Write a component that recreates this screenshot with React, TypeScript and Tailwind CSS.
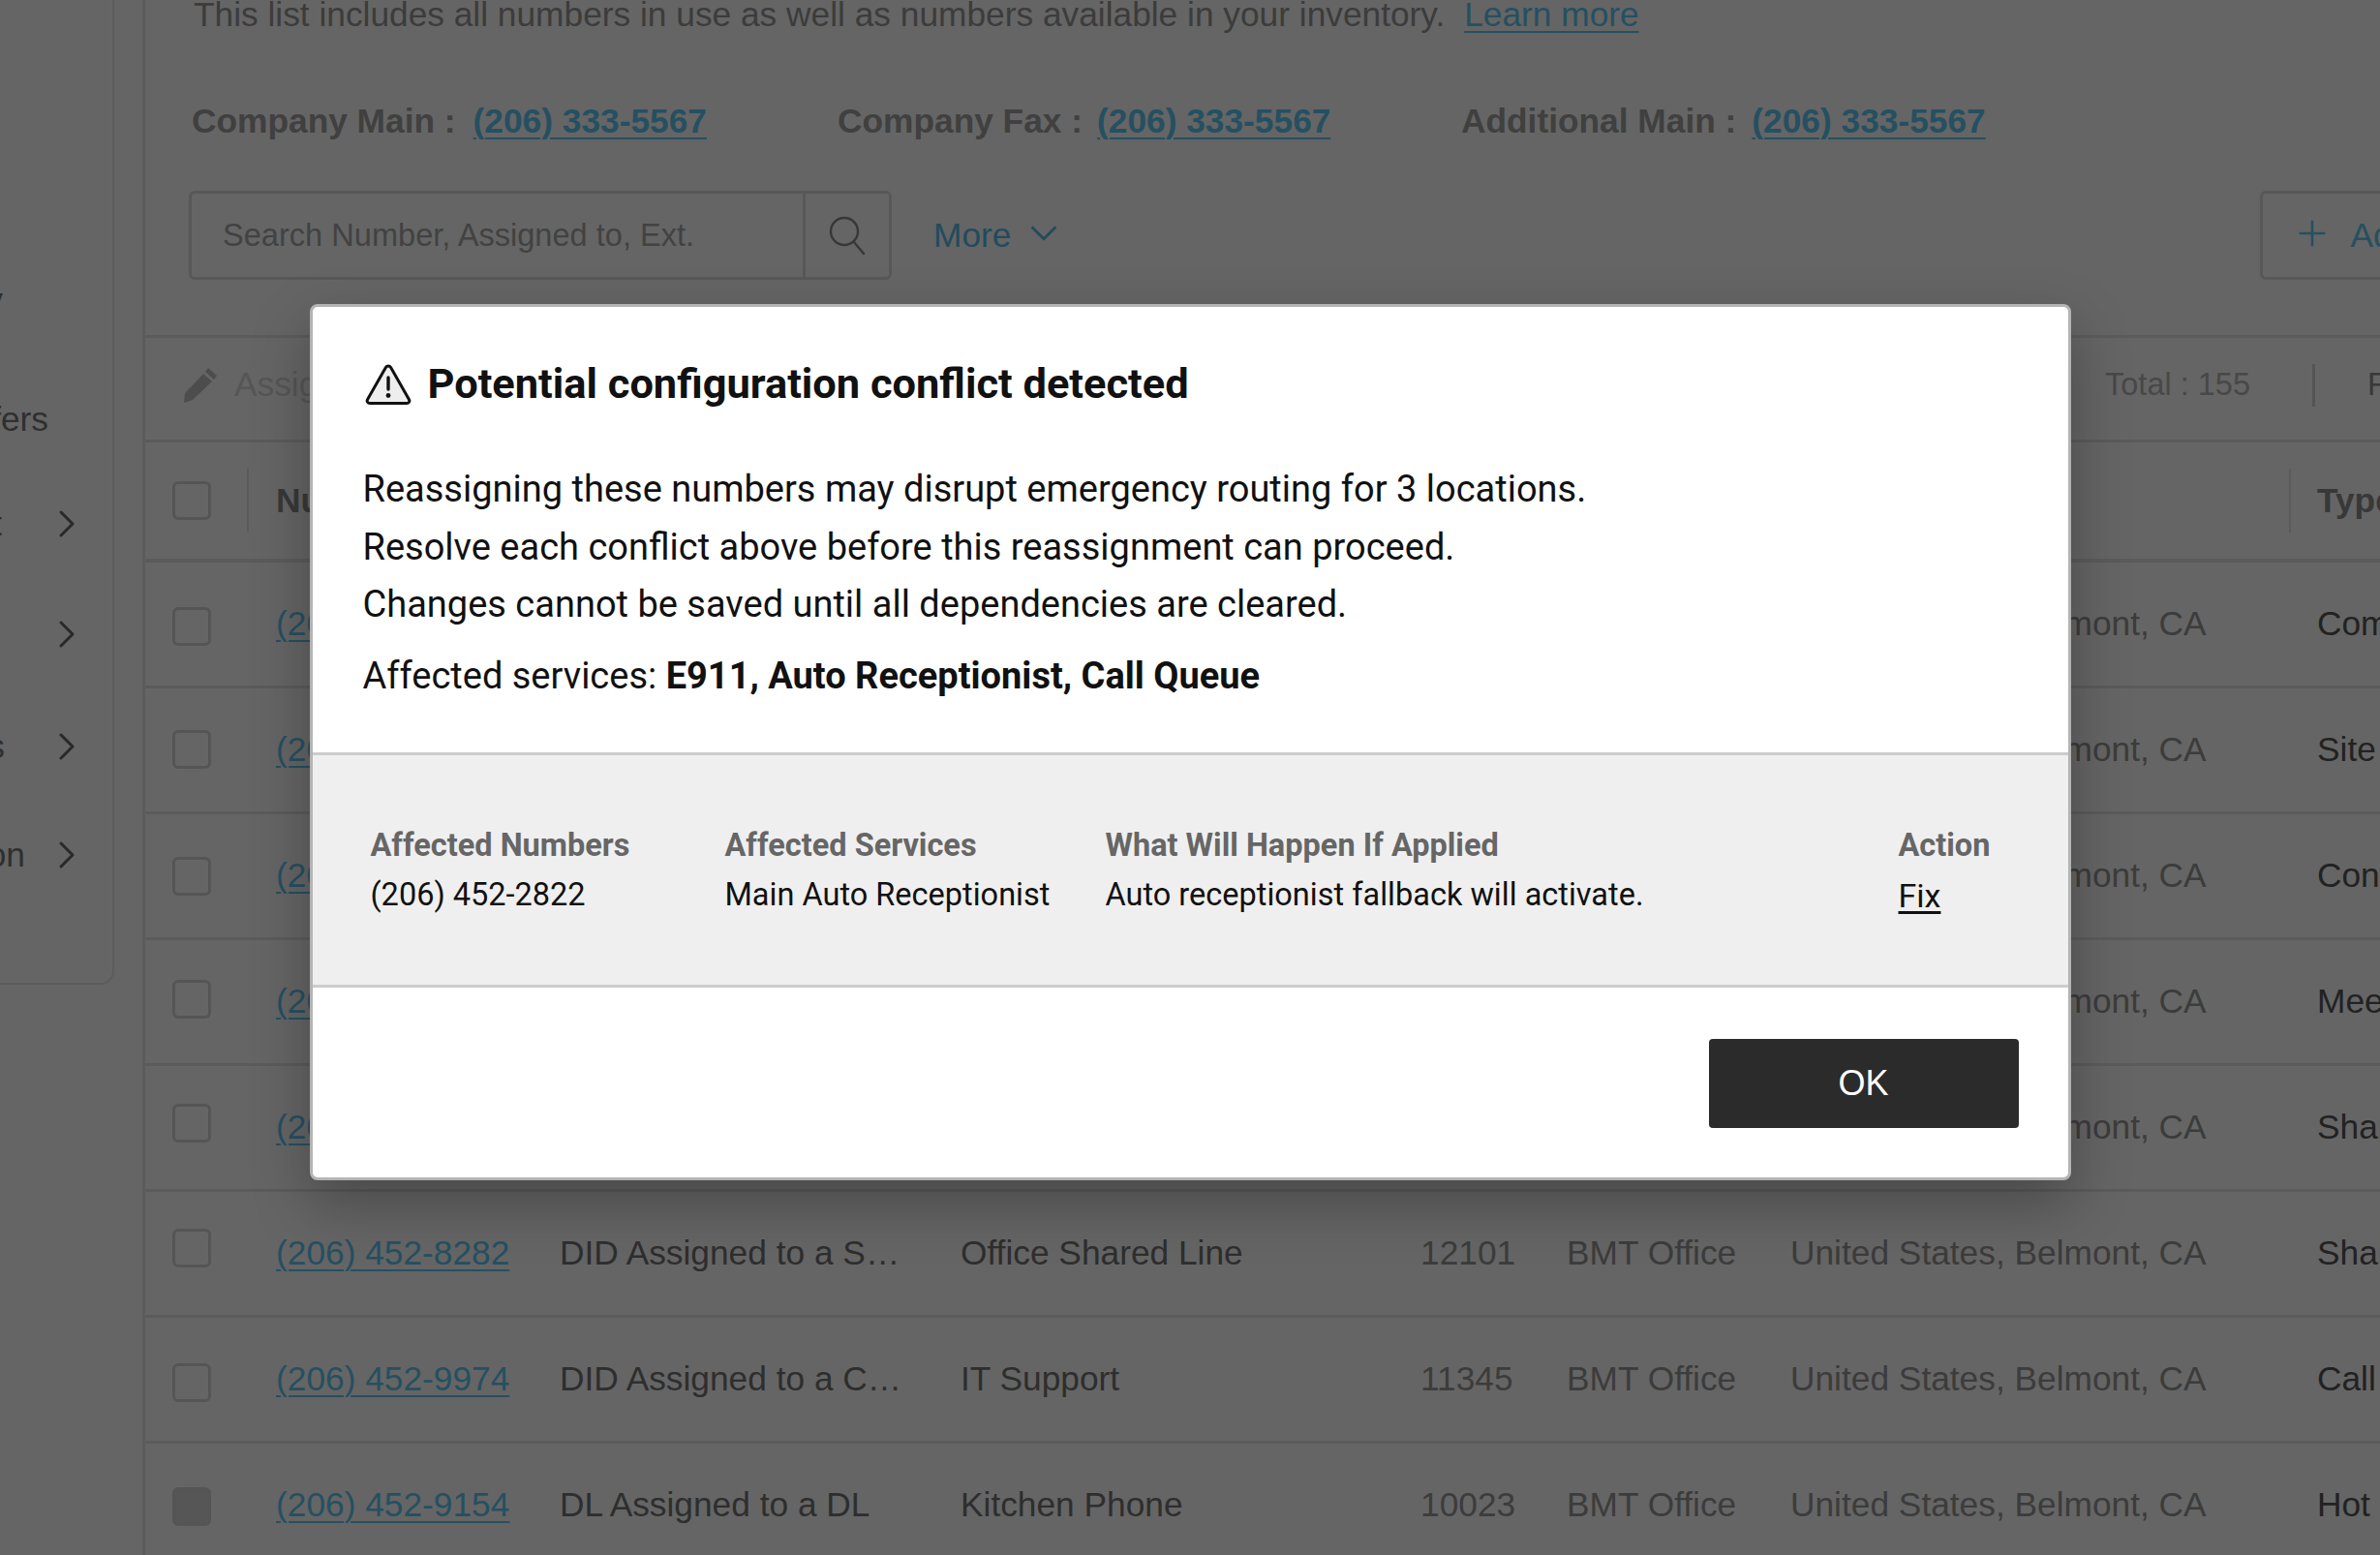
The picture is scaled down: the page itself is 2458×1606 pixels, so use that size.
import React from 'react';
import { ChevronDown, ChevronRight, Plus } from 'lucide-react';

const SANS = 'font-["Liberation_Sans",Arial,sans-serif]';

type Row = {
    number: string;
    assign: string;
    name: string;
    ext: string;
    type: string;
    cbClass: string;
    checked?: boolean;
};

const ROWS: Row[] = [
    { number: '(206) 452-1100', assign: 'DID Assigned to a C…', name: 'Company Main', ext: '10000', type: 'Company Main', cbClass: 'mt-[4px]' },
    { number: '(206) 452-1204', assign: 'DID Assigned to a S…', name: 'Belmont Site', ext: '10100', type: 'Site Main', cbClass: 'mt-[-2px]' },
    { number: '(206) 452-2822', assign: 'DID Assigned to a A…', name: 'Main Auto Receptionist', ext: '10200', type: 'Contact Center', cbClass: '' },
    { number: '(206) 452-3310', assign: 'DID Assigned to a R…', name: 'Meeting Room', ext: '10310', type: 'Meeting Room', cbClass: 'mt-[-6px]' },
    { number: '(206) 452-5521', assign: 'DID Assigned to a S…', name: 'Front Desk', ext: '11200', type: 'Shared Line', cbClass: 'mt-[-10px]' },
    { number: '(206) 452-8282', assign: 'DID Assigned to a S…', name: 'Office Shared Line', ext: '12101', type: 'Shared Line', cbClass: 'mt-[-12px]' },
    { number: '(206) 452-9974', assign: 'DID Assigned to a C…', name: 'IT Support', ext: '11345', type: 'Call Queue', cbClass: 'mt-[6px]' },
    { number: '(206) 452-9154', assign: 'DL Assigned to a DL', name: 'Kitchen Phone', ext: '10023', type: 'Hot Desk', cbClass: 'mt-[2px]', checked: true },
];

const SIDE_ITEMS = [
    { label: 'Directory', textWidth: 'w-[3px]', rowClass: 'mt-[290px]', chevron: false },
    { label: 'Call Transfers', textWidth: 'w-[50px]', rowClass: 'mt-[83px]', chevron: false },
    { label: 'Contact', textWidth: 'w-[2px]', rowClass: 'mt-[68px]', chevron: true },
    { label: 'Routing', textWidth: 'w-[1px]', rowClass: 'mt-[74px]', chevron: true },
    { label: 'Locations', textWidth: 'w-[5px]', rowClass: 'mt-[76px]', chevron: true },
    { label: 'Integration', textWidth: 'w-[26px]', rowClass: 'mt-[72px]', chevron: true },
];

const Checkbox: React.FC<{ checked?: boolean; className?: string }> = ({ checked, className = '' }) => (
    <div className={`w-[40px] h-[40px] shrink-0 rounded-[6px] border-[3px] border-[#d4d4d4] ${checked ? 'bg-[#d8d8d8]' : ''} ${className}`} />
);

const PhoneLink: React.FC<{ children: React.ReactNode }> = ({ children }) => (
    <a className="text-[#5cc8f2] underline underline-offset-[5px] decoration-[2px] whitespace-nowrap">{children}</a>
);

const Sidebar = () => (
    <aside className="w-[118px] h-[1017px] shrink-0 border-r-[2px] border-b-[2px] border-[#e6e6e6] rounded-br-[14px] flex flex-col text-[#777777] text-[35.3px]">
        {SIDE_ITEMS.map((item) => (
            <div key={item.label} className={`h-[40px] flex items-center justify-between pr-[23px] ${item.rowClass}`}>
                <div className={`${item.textWidth} overflow-hidden flex justify-end whitespace-nowrap`}>
                    <span>{item.label}</span>
                </div>
                {item.chevron && <ChevronRight className="w-[48px] h-[48px] shrink-0 text-[#666666]" strokeWidth={1.5} />}
            </div>
        ))}
    </aside>
);

const TopSection = () => (
    <div className="pl-[50px] text-[35.3px] text-[#969696]">
        <div className="h-[40px] mt-[-5px] flex items-center whitespace-nowrap">
            <span>This list includes all numbers in use as well as numbers available in your inventory.</span>
            <a className="ml-[20px] text-[#5cc8f2] underline underline-offset-[5px] decoration-[2px]">Learn more</a>
        </div>
        <div className="mt-[70px] ml-[-2px] h-[40px] flex items-center whitespace-nowrap font-bold text-[#a0a0a0]">
            <div className="flex gap-[18px] w-[667px] shrink-0">
                <span>Company Main :</span>
                <PhoneLink>(206) 333-5567</PhoneLink>
            </div>
            <div className="flex gap-[15px] w-[644px] shrink-0">
                <span>Company Fax :</span>
                <PhoneLink>(206) 333-5567</PhoneLink>
            </div>
            <div className="flex gap-[16px] shrink-0">
                <span>Additional Main :</span>
                <PhoneLink>(206) 333-5567</PhoneLink>
            </div>
        </div>
    </div>
);

const SearchBar = () => (
    <div className="mt-[52px] ml-[45px] h-[92px] flex items-center text-[35.3px] whitespace-nowrap">
        <div className="w-[726px] shrink-0 h-full flex border-[3px] border-[#dcdcdc] rounded-[6px]">
            <div className="flex-1 flex items-center pl-[32px] text-[#a6a6a6] text-[32.6px]">Search Number, Assigned to, Ext.</div>
            <div className="w-[89px] shrink-0 border-l-[3px] border-[#dcdcdc] flex items-center justify-center">
                <svg viewBox="0 0 40 44" className="w-[40px] h-[44px]" fill="none" stroke="#8a8a8a" strokeWidth="2.4" strokeLinecap="round">
                    <circle cx="17" cy="18" r="14" />
                    <path d="M27 29 L37 41" />
                </svg>
            </div>
        </div>
        <div className="ml-[43px] flex items-center shrink-0 text-[#58bce6]">
            <span>More</span>
            <ChevronDown className="w-[46px] h-[46px] ml-[11px] mt-[-4px]" strokeWidth={1.6} />
        </div>
        <div className="ml-[1233px] w-[300px] shrink-0 h-full border-[3px] border-[#dcdcdc] rounded-[6px] flex items-center pl-[30px] text-[#5cc8f2]">
            <Plus className="w-[42px] h-[42px] mt-[-4px] shrink-0" strokeWidth={1.5} />
            <span className="ml-[18px]">Add Numbers</span>
        </div>
    </div>
);

const Toolbar = () => (
    <div className="mt-[57px] h-[111px] pb-[8px] border-t-[3px] border-b-[3px] border-[#e4e4e4] flex items-center whitespace-nowrap text-[35.3px]">
        <svg viewBox="0 0 38 40" className="ml-[38px] w-[38px] h-[40px] shrink-0" fill="#c0c0c0">
            <path d="M27 2 L36 10 L33 14 L24 6 Z M22 8 L31 16 L11 35 L2 38 L3 28 Z" />
        </svg>
        <span className="ml-[16px] text-[#d6d6d6]">Assign</span>
        <div className="ml-auto flex items-center text-[#b4b4b4] text-[32.5px]">
            <span>Total : 155</span>
            <div className="w-[3px] h-[44px] bg-[#d4d4d4] ml-[64px] shrink-0" />
            <span className="ml-[54px] w-[13px] overflow-hidden text-[#909090]">Filter</span>
        </div>
    </div>
);

const HeaderRow = () => (
    <div className="h-[124px] border-b-[4px] border-[#e4e4e4] flex items-center pl-[28px] whitespace-nowrap text-[35.3px] font-bold text-[#8c8c8c]">
        <Checkbox />
        <div className="w-[2px] h-[66px] shrink-0 bg-[#e0e0e0] ml-[37px]" />
        <span className="ml-[28px] w-[2079px] shrink-0">Number</span>
        <div className="w-[2px] h-[66px] shrink-0 bg-[#e0e0e0] mr-[27px]" />
        <span>Type</span>
    </div>
);

const TableRow: React.FC<{ row: Row }> = ({ row }) => (
    <div className="h-[130px] shrink-0 border-b-[3px] border-[#e4e4e4] flex items-center pl-[28px] whitespace-nowrap text-[35.3px]">
        <Checkbox checked={row.checked} className={row.cbClass} />
        <div className="ml-[67px] w-[293px] shrink-0"><PhoneLink>{row.number}</PhoneLink></div>
        <div className="w-[414px] shrink-0 text-[#737373]">{row.assign}</div>
        <div className="w-[475px] shrink-0 text-[#737373]">{row.name}</div>
        <div className="w-[151px] shrink-0 text-[#969696]">{row.ext}</div>
        <div className="w-[231px] shrink-0 text-[#969696]">BMT Office</div>
        <div className="w-[544px] shrink-0 text-[#969696]">United States, Belmont, CA</div>
        <div className="shrink-0 text-[#555555]">{row.type}</div>
    </div>
);

const WarningIcon = () => (
    <svg viewBox="0 0 48 44" className="w-[48px] h-[44px] shrink-0" fill="none">
        <path d="M24 3 C25 3 26 3.6 26.6 4.6 L45.4 37.4 C46.6 39.4 45.2 41.5 43 41.5 L5 41.5 C2.8 41.5 1.4 39.4 2.6 37.4 L21.4 4.6 C22 3.6 23 3 24 3 Z" fill="#eeeeee" stroke="#111111" strokeWidth="3" strokeLinejoin="round" />
        <path d="M24 15 L24 27" stroke="#111111" strokeWidth="3.4" strokeLinecap="round" />
        <circle cx="24" cy="33.5" r="2.4" fill="#111111" />
    </svg>
);

const ConflictModal = () => (
    <div className="absolute inset-0 bg-black/60 flex justify-center items-start pt-[314px]">
        <div className="w-[1819px] h-[905px] flex flex-col bg-white border-[3px] border-[#b4b4b4] rounded-[8px] shadow-[0_24px_60px_rgba(0,0,0,0.28)] font-['Roboto',sans-serif] text-[#111111]">
            <div className="h-[460px] shrink-0 pl-[54px] pt-[56px]">
                <div className="flex items-center gap-[17px] h-[48px] text-[43.4px] font-bold">
                    <WarningIcon />
                    <span className="whitespace-nowrap">Potential configuration conflict detected</span>
                </div>
                <div className="mt-[55px] ml-[-2px] text-[38px] leading-[59.5px] whitespace-nowrap">
                    <p>Reassigning these numbers may disrupt emergency routing for 3 locations.</p>
                    <p>Resolve each conflict above before this reassignment can proceed.</p>
                    <p>Changes cannot be saved until all dependencies are cleared.</p>
                    <p className="mt-[14px]">Affected services: <span className="font-bold">E911, Auto Receptionist, Call Queue</span></p>
                </div>
            </div>
            <div className="h-[243px] shrink-0 bg-[#efefef] border-t-[3px] border-b-[3px] border-[#cccccc] flex pl-[60px] pt-[73px] text-[32.5px] whitespace-nowrap">
                <div className="w-[366px] shrink-0">
                    <div className="font-bold text-[#666666] leading-[40px]">Affected Numbers</div>
                    <div className="mt-[11px] leading-[40px]">(206) 452-2822</div>
                </div>
                <div className="w-[393px] shrink-0">
                    <div className="font-bold text-[#666666] leading-[40px]">Affected Services</div>
                    <div className="mt-[11px] leading-[40px]">Main Auto Receptionist</div>
                </div>
                <div className="w-[819px] shrink-0">
                    <div className="font-bold text-[#666666] leading-[40px]">What Will Happen If Applied</div>
                    <div className="mt-[11px] leading-[40px]">Auto receptionist fallback will activate.</div>
                </div>
                <div>
                    <div className="font-bold text-[#666666] leading-[40px]">Action</div>
                    <a className="block mt-[12px] leading-[40px] text-[34px] underline underline-offset-[4px]">Fix</a>
                </div>
            </div>
            <div className="flex-1 flex justify-end items-start pt-[53px] pr-[51px]">
                <button className={`w-[320px] h-[92px] bg-[#2b2b2b] text-white text-[36px] rounded-[4px] ${SANS}`}>OK</button>
            </div>
        </div>
    </div>
);

export default function App() {
    return (
        <div className={`relative w-[2458px] h-[1606px] overflow-hidden bg-[#fdfdfd] ${SANS}`}>
            <div className="flex">
                <Sidebar />
                <main className="ml-[29px] flex-1 min-w-0 border-l-[3px] border-[#e6e6e6]">
                    <TopSection />
                    <SearchBar />
                    <Toolbar />
                    <HeaderRow />
                    {ROWS.map((row) => (
                        <TableRow key={row.number} row={row} />
                    ))}
                </main>
            </div>
            <ConflictModal />
        </div>
    );
}
